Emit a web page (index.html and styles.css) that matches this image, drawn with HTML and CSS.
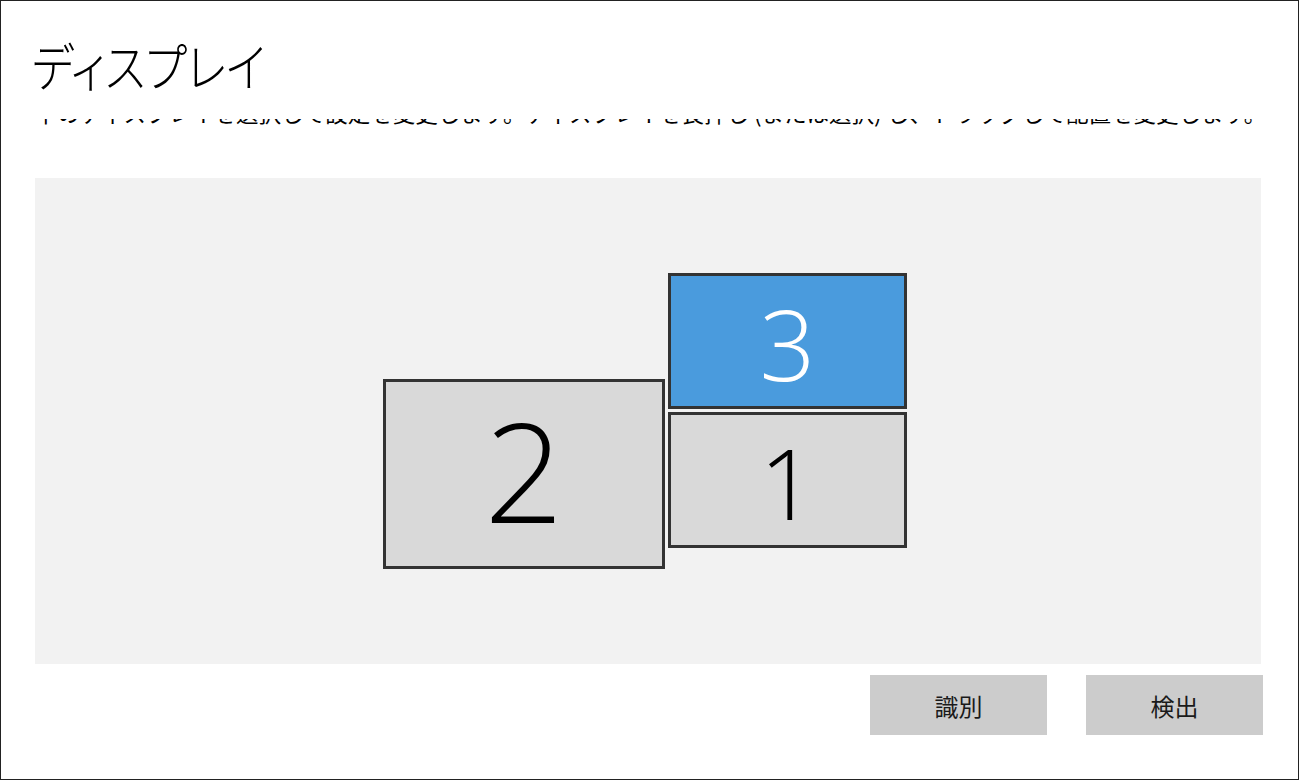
FILE: index.html
```html
<!DOCTYPE html>
<html lang="ja">
<head>
<meta charset="utf-8">
<title>ディスプレイ</title>
<link rel="stylesheet" href="styles.css">
</head>
<body>
<div class="window">
  <header class="header">
    <h1 class="title">ディスプレイ</h1>
  </header>
  <div class="desc-clip">
    <p class="desc">下のディスプレイを選択して設定を変更します。ディスプレイを長押し (または選択) し、ドラッグして配置を変更します。</p>
  </div>
  <div class="canvas">
    <div class="monitor monitor-2"><span class="num num-big">2</span></div>
    <div class="monitor monitor-3 selected"><span class="num">3</span></div>
    <div class="monitor monitor-1"><span class="num">1</span></div>
  </div>
  <div class="actions">
    <button class="btn" type="button">識別</button>
    <button class="btn" type="button">検出</button>
  </div>
</div>
</body>
</html>
```
FILE: styles.css
```css
* { box-sizing: border-box; }
html, body { margin: 0; padding: 0; background: #ffffff; }
body {
  font-family: "Noto Sans CJK JP", "Noto Sans", sans-serif;
  color: #000;
}
.window {
  width: 1299px;
  height: 780px;
  border: 1px solid #222;
  background: #fff;
  padding: 0 37px 0 34px;
  overflow: hidden;
}
.header { padding-top: 28px; }
.title {
  margin: 0 0 0 -3px;
  font-size: 52px;
  font-weight: 300;
  line-height: 72px;
  font-feature-settings: "palt";
  letter-spacing: 0;
  color: #000;
  transform: scaleX(0.86);
  transform-origin: left center;
}
.desc-clip {
  height: 8px;
  overflow: hidden;
  display: flex;
  align-items: flex-end;
  margin-top: 18px;
}
.desc {
  margin: 0;
  font-size: 22.5px;
  line-height: 30px;
  white-space: nowrap;
  color: #000;
}
.canvas {
  position: relative;
  margin-top: 51px;
  width: 1226px;
  height: 486px;
  background: #f2f2f2;
}
.monitor {
  position: absolute;
  border: 3px solid #333;
  background: #d9d9d9;
  display: flex;
  align-items: center;
  justify-content: center;
  color: #000;
  font-family: "Open Sans", "Noto Sans", sans-serif;
  font-weight: 300;
}
.monitor.selected { background: #4a9bdd; color: #fff; }
.monitor-2 { left: 348px; top: 201px; width: 282px; height: 190px; padding-bottom: 10px; }
.monitor-3 { left: 633px; top: 95px; width: 239px; height: 136px; padding-top: 3px; }
.monitor-1 { left: 633px; top: 234px; width: 239px; height: 136px; padding-top: 3px; }
.num { font-size: 98px; line-height: 1; }
.num-big { font-size: 139px; }
.actions {
  display: flex;
  justify-content: flex-end;
  gap: 39px;
  margin-top: 11px;
  margin-right: -2px;
}
.btn {
  width: 177px;
  height: 60px;
  border: 0;
  background: #cccccc;
  font-family: "Noto Sans CJK JP", "Noto Sans", sans-serif;
  font-size: 24px;
  color: #1a1a1a;
  padding: 0;
}
```
